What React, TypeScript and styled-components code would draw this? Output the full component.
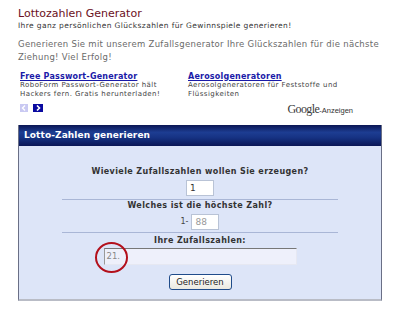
import React from "react";
import styled, { createGlobalStyle } from "styled-components";

const GlobalStyle = createGlobalStyle`
  html, body { margin: 0; padding: 0; background: #ffffff; }
  body { font-family: "DejaVu Sans", Verdana, sans-serif; }
  * { box-sizing: border-box; }
`;

const Page = styled.div`
  width: 400px;
  height: 309px;
  padding: 7px 18px 0 18px;
  overflow: hidden;
`;

const Title = styled.h1`
  margin: 0;
  font-size: 11px;
  line-height: 14px;
  font-weight: normal;
  color: #6b1023;
`;

const Subtitle = styled.p`
  margin: 0;
  font-size: 7.5px;
  line-height: 10px;
  color: #333;
  letter-spacing: 0.38px;
  white-space: nowrap;
`;

const Intro = styled.p`
  margin: 6.5px 0 0 0;
  font-size: 8.5px;
  line-height: 13px;
  color: #6a6a6a;
  letter-spacing: 0.3px;
  white-space: nowrap;
`;

const Ads = styled.div`
  display: grid;
  grid-template-columns: 168px 165px;
  margin-top: 8px;
  padding-left: 2px;
`;

const Ad = styled.div`
  display: flex;
  flex-direction: column;
`;

const AdTitle = styled.a`
  font-size: 8px;
  line-height: 9px;
  font-weight: bold;
  color: #1a1aa8;
  text-decoration: underline;
  letter-spacing: 0.2px;
`;

const AdText = styled.div`
  font-size: 7px;
  line-height: 9px;
  color: #444;
  letter-spacing: 0.45px;
  white-space: nowrap;
`;

const Arrows = styled.div`
  display: flex;
  gap: 5px;
  margin-top: 5px;
`;

const ArrowBox = styled.span<{ $active?: boolean }>`
  display: flex;
  align-items: center;
  justify-content: center;
  width: ${(p) => (p.$active ? 10 : 8)}px;
  height: 8px;
  background: ${(p) => (p.$active ? "#0a0aa0" : "#c9c9f2")};
`;

const GoogleRow = styled.div`
  display: flex;
  justify-content: flex-end;
  align-items: baseline;
  margin-top: 3px;
`;

const GoogleWord = styled.span`
  font-family: "Liberation Serif", serif;
  font-size: 12px;
  letter-spacing: -0.6px;
  color: #3a3a3a;
`;

const GoogleSuffix = styled.span`
  font-family: "Liberation Sans", Arial, sans-serif;
  font-size: 7.5px;
  color: #333;
`;

const Panel = styled.div`
  margin-top: 8px;
  width: 364px;
  border-left: 1px solid #6a6f86;
  border-right: 1px solid #6a6f86;
  border-bottom: 2px solid #b9bcc6;
`;

const PanelHeader = styled.div`
  height: 21px;
  display: flex;
  align-items: center;
  padding-left: 5px;
  background: linear-gradient(#0b1654 0%, #1d3d92 35%, #163283 60%, #0a1656 100%);
  color: #ffffff;
  font-weight: bold;
  font-size: 9px;
  letter-spacing: 0.1px;
`;

const PanelBody = styled.div`
  background: #dde5f8;
  display: flex;
  flex-direction: column;
  align-items: center;
  padding: 20px 0 9px 0;
`;

const Question = styled.div<{ $mt?: number }>`
  margin-top: ${(p) => p.$mt ?? 0}px;
  font-size: 8px;
  line-height: 12px;
  font-weight: bold;
  color: #333;
  letter-spacing: 0.4px;
  white-space: nowrap;
`;

const FieldRow = styled.div<{ $mt: number }>`
  display: flex;
  align-items: center;
  gap: 3px;
  margin-top: ${(p) => p.$mt}px;
  font-size: 8px;
  color: #444;
`;

const SmallInput = styled.div<{ $muted?: boolean }>`
  width: 28px;
  height: 16px;
  background: #fff;
  border: 1px solid #b9c3d6;
  font-size: 9px;
  line-height: 14px;
  padding-left: 3px;
  color: ${(p) => (p.$muted ? "#999" : "#333")};
`;

const Divider = styled.div<{ $mt: number }>`
  width: 276px;
  height: 1px;
  background: #a9b6d6;
  margin-top: ${(p) => p.$mt}px;
`;

const ResultField = styled.div`
  position: relative;
  width: 193px;
  height: 17px;
  margin-top: 1px;
  background: #eef0fb;
  border-top: 1px solid #777;
  border-left: 1px solid #999;
  border-right: 1px solid #e6e8f2;
  border-bottom: 1px solid #e6e8f2;
  font-size: 8.5px;
  line-height: 15px;
  padding-left: 2px;
  color: #888;
`;

const Circle = styled.div`
  position: absolute;
  left: -10px;
  top: -7px;
  width: 33px;
  height: 31px;
  border-radius: 50%;
  border: 2.5px solid #b3101c;
`;

const Button = styled.button`
  margin-top: 9px;
  width: 63px;
  height: 16px;
  padding: 0;
  border: 1px solid #1f4b8a;
  border-radius: 3px;
  background: linear-gradient(#ffffff, #ebe9e0);
  font-family: "DejaVu Sans", sans-serif;
  font-size: 8.5px;
  color: #222;
`;

export default function App() {
  return (
    <>
      <GlobalStyle />
      <Page>
        <Title>Lottozahlen Generator</Title>
        <Subtitle>Ihre ganz persönlichen Glückszahlen für Gewinnspiele generieren!</Subtitle>
        <Intro>
          Generieren Sie mit unserem Zufallsgenerator Ihre Glückszahlen für die nächste
          <br />
          Ziehung! Viel Erfolg!
        </Intro>
        <Ads>
          <Ad>
            <AdTitle>Free Passwort-Generator</AdTitle>
            <AdText>RoboForm Passwort-Generator hält</AdText>
            <AdText>Hackers fern. Gratis herunterladen!</AdText>
            <Arrows>
              <ArrowBox>
                <svg width="6" height="6" viewBox="0 0 6 6">
                  <path d="M4 0.5 L1.5 3 L4 5.5" stroke="#fff" strokeWidth="1.4" fill="none" />
                </svg>
              </ArrowBox>
              <ArrowBox $active>
                <svg width="6" height="6" viewBox="0 0 6 6">
                  <path d="M2 0.5 L4.5 3 L2 5.5" stroke="#fff" strokeWidth="1.6" fill="none" />
                </svg>
              </ArrowBox>
            </Arrows>
          </Ad>
          <Ad>
            <AdTitle>Aerosolgeneratoren</AdTitle>
            <AdText>Aerosolgeneratoren für Feststoffe und</AdText>
            <AdText>Flüssigkeiten</AdText>
            <GoogleRow>
              <GoogleWord>Google</GoogleWord>
              <GoogleSuffix>-Anzeigen</GoogleSuffix>
            </GoogleRow>
          </Ad>
        </Ads>
        <Panel>
          <PanelHeader>Lotto-Zahlen generieren</PanelHeader>
          <PanelBody>
            <Question>Wieviele Zufallszahlen wollen Sie erzeugen?</Question>
            <FieldRow $mt={2}>
              <SmallInput>1</SmallInput>
            </FieldRow>
            <Divider $mt={3} />
            <Question>Welches ist die höchste Zahl?</Question>
            <FieldRow $mt={2}>
              <span>1-</span>
              <SmallInput $muted>88</SmallInput>
            </FieldRow>
            <Divider $mt={2} />
            <Question $mt={2}>Ihre Zufallszahlen:</Question>
            <ResultField>
              21.
              <Circle />
            </ResultField>
            <Button>Generieren</Button>
          </PanelBody>
        </Panel>
      </Page>
    </>
  );
}
